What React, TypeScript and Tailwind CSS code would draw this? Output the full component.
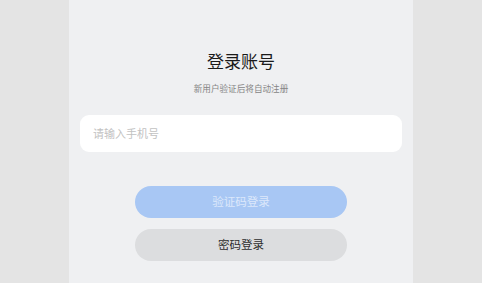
export default function App() {
  return (
    <div
      className="flex h-[283px] w-full justify-center bg-[#e4e4e4]"
      style={{ fontFamily: '"Noto Sans CJK SC", "Noto Sans", sans-serif' }}
    >
      <div className="flex h-full w-[344px] flex-col items-center bg-[#eff0f2] px-[11px] pt-[49px]">
        {/* Title */}
        <h1 className="text-[17px] leading-[24px] text-[#1a1a1a]">登录账号</h1>
        <p className="mt-[8px] text-[8.6px] leading-[14px] text-[#858585]">新用户验证后将自动注册</p>

        {/* Phone input */}
        <div className="mt-[20px] flex h-[37px] w-full items-center rounded-[9px] bg-white px-[13px]">
          <input
            className="w-full bg-transparent text-[11px] text-[#333] outline-none placeholder:text-[#c2c2c2]"
            placeholder="请输入手机号"
          />
        </div>

        {/* Actions */}
        <button className="mt-[34px] flex h-[32px] w-[212px] items-center justify-center rounded-full bg-[#a8c7f4] text-[11.5px] text-[#dce8fb]">
          验证码登录
        </button>
        <button className="mt-[11px] flex h-[32px] w-[212px] items-center justify-center rounded-full bg-[#dcdddf] text-[11.5px] text-[#2e2e2e]">
          密码登录
        </button>
      </div>
    </div>
  );
}
